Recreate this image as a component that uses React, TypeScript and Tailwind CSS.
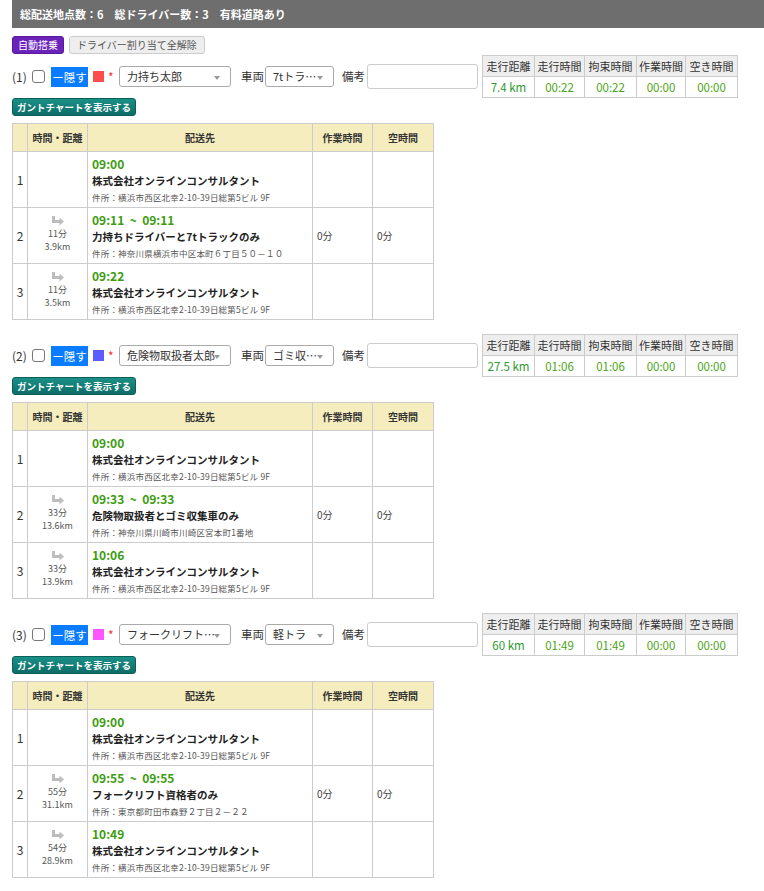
import React from 'react'

type Stop = { time: string; name: string; addr: string; min?: string; km?: string; work?: string; idle?: string }
type Route = {
  no: number
  color: string
  driver: string
  vehicle: string
  summary: string[]
  stops: Stop[]
}

const HQ = '株式会社オンラインコンサルタント'
const HQ_ADDR = '件所：横浜市西区北幸2-10-39日総第5ビル 9F'

const ROUTES: Route[] = [
  {
    no: 1, color: 'bg-[#ff4d4d]', driver: '力持ち太郎', vehicle: '7tトラ…',
    summary: ['7.4 km', '00:22', '00:22', '00:00', '00:00'],
    stops: [
      { time: '09:00', name: HQ, addr: HQ_ADDR },
      { time: '09:11 ~ 09:11', name: '力持ちドライバーと7tトラックのみ', addr: '件所：神奈川県横浜市中区本町６丁目５０－１０', min: '11分', km: '3.9km', work: '0分', idle: '0分' },
      { time: '09:22', name: HQ, addr: HQ_ADDR, min: '11分', km: '3.5km' },
    ],
  },
  {
    no: 2, color: 'bg-[#5b5bff]', driver: '危険物取扱者太郎', vehicle: 'ゴミ収…',
    summary: ['27.5 km', '01:06', '01:06', '00:00', '00:00'],
    stops: [
      { time: '09:00', name: HQ, addr: HQ_ADDR },
      { time: '09:33 ~ 09:33', name: '危険物取扱者とゴミ収集車のみ', addr: '件所：神奈川県川崎市川崎区宮本町1番地', min: '33分', km: '13.6km', work: '0分', idle: '0分' },
      { time: '10:06', name: HQ, addr: HQ_ADDR, min: '33分', km: '13.9km' },
    ],
  },
  {
    no: 3, color: 'bg-[#ff55ff]', driver: 'フォークリフト…', vehicle: '軽トラ',
    summary: ['60 km', '01:49', '01:49', '00:00', '00:00'],
    stops: [
      { time: '09:00', name: HQ, addr: HQ_ADDR },
      { time: '09:55 ~ 09:55', name: 'フォークリフト資格者のみ', addr: '件所：東京都町田市森野２丁目２－２２', min: '55分', km: '31.1km', work: '0分', idle: '0分' },
      { time: '10:49', name: HQ, addr: HQ_ADDR, min: '54分', km: '28.9km' },
    ],
  },
]

const SUMMARY_HEAD = ['走行距離', '走行時間', '拘束時間', '作業時間', '空き時間']
const SUMMARY_W = ['w-[52px]', 'w-[50px]', 'w-[52px]', 'w-[49px]', 'w-[52px]']

function TurnIcon() {
  return (
    <svg width="14" height="10" viewBox="0 0 14 10" className="mx-auto">
      <path d="M2.5 0 V5.5 H9" fill="none" stroke="#bdbdbd" strokeWidth="3" />
      <path d="M8.5 1.5 L13 5.5 L8.5 9.5 Z" fill="#bdbdbd" />
    </svg>
  )
}

function Caret() {
  return <span className="absolute right-[10px] top-[9px] w-0 h-0 border-l-[3.5px] border-r-[3.5px] border-t-[4px] border-l-transparent border-r-transparent border-t-[#999]" />
}

function RouteBlock({ r }: { r: Route }) {
  return (
    <div className="mb-[14px]">
      {/* controls + summary */}
      <div className="flex items-center h-[43px]">
        <div className="flex items-center w-[465px] shrink-0 whitespace-nowrap">
          <span className="text-[12px] text-[#333] w-[20px] shrink-0">({r.no})</span>
          <span className="w-[13px] h-[13px] border border-[#777] rounded-[3px] bg-white shrink-0" />
          <span className="ml-[6px] bg-[#0a7cff] text-white text-[11.5px] leading-[20px] h-[20px] w-[37px] text-center shrink-0">ー隠す</span>
          <span className={`ml-[5px] w-[11px] h-[11px] shrink-0 ${r.color}`} />
          <span className="ml-[4px] text-[#e33] text-[12px] w-[11px] shrink-0">*</span>
          <div className="relative w-[112px] h-[21px] shrink-0 overflow-hidden border border-[#aaa] rounded-[3px] bg-white text-[11px] leading-[19px] pl-[7px] text-[#333]">
            {r.driver}
            <Caret />
          </div>
          <span className="ml-[10px] text-[11.5px] text-[#333] w-[24px] shrink-0">車両</span>
          <div className="relative w-[69px] h-[21px] shrink-0 overflow-hidden border border-[#aaa] rounded-[3px] bg-white text-[11px] leading-[19px] pl-[7px] text-[#333]">
            {r.vehicle}
            <Caret />
          </div>
          <span className="ml-[8px] text-[11.5px] text-[#333] w-[25px] shrink-0">備考</span>
          <div className="w-[111px] h-[25px] shrink-0 border border-[#ccc] rounded-[3px] bg-white" />
        </div>
        <table className="ml-[5px] border-collapse table-fixed whitespace-nowrap">
          <thead>
            <tr>
              {SUMMARY_HEAD.map((h, i) => (
                <th key={h} className={`${SUMMARY_W[i]} border border-[#ccc] bg-[#eee] font-normal text-[#333] text-[11px] h-[21px] p-0 leading-[19px]`}>{h}</th>
              ))}
            </tr>
          </thead>
          <tbody>
            <tr>
              {r.summary.map((v, i) => (
                <td key={i} className={`border border-[#ccc] text-center text-[11.5px] h-[21px] p-0 leading-[19px] ${i === 0 ? 'text-[#2e9a2e]' : 'text-[#4aa514]'}`}>{v}</td>
              ))}
            </tr>
          </tbody>
        </table>
      </div>

      <button className="block w-[124px] h-[18px] rounded-[3px] bg-gradient-to-b from-[#1a9087] to-[#0d6d68] border border-[#0b5f5a] text-white text-[9.5px] font-bold leading-[16px] whitespace-nowrap">
        ガントチャートを表示する
      </button>

      {/* stops */}
      <table className="mt-[7px] w-[421px] border-collapse table-fixed">
        <colgroup>
          <col className="w-[15px]" />
          <col className="w-[60px]" />
          <col className="w-[225px]" />
          <col className="w-[60px]" />
          <col className="w-[61px]" />
        </colgroup>
        <thead>
          <tr className="bg-[#f5edbd] h-[28px] text-[10px] font-bold text-[#333]">
            <th className="border border-[#ccc]" />
            <th className="border border-[#ccc]">時間・距離</th>
            <th className="border border-[#ccc]">配送先</th>
            <th className="border border-[#ccc]">作業時間</th>
            <th className="border border-[#ccc]">空時間</th>
          </tr>
        </thead>
        <tbody>
          {r.stops.map((s, i) => (
            <tr key={i} className="h-[56px]">
              <td className="border border-[#ccc] text-center text-[12px] text-[#333]">{i + 1}</td>
              <td className="border border-[#ccc] text-center text-[9px] text-[#555] leading-[13px]">
                {s.min && (
                  <div className="flex flex-col items-center pb-[3px]">
                    <TurnIcon />
                    <span className="mt-[1px]">{s.min}</span>
                    <span>{s.km}</span>
                  </div>
                )}
              </td>
              <td className="border border-[#ccc] px-[4px] align-middle whitespace-nowrap">
                <div className="text-[12px] font-bold text-[#3c9c10] leading-[16px] whitespace-pre">{s.time.replace(' ~ ', '  ~  ')}</div>
                <div className="text-[10.5px] font-bold text-[#222] leading-[18px]">{s.name}</div>
                <div className="text-[8.5px] text-[#555] leading-[14px] tracking-[0.2px]">{s.addr}</div>
              </td>
              <td className="border border-[#ccc] text-[10px] text-[#444] px-[4px]">{s.work}</td>
              <td className="border border-[#ccc] text-[10px] text-[#444] px-[4px]">{s.idle}</td>
            </tr>
          ))}
        </tbody>
      </table>
    </div>
  )
}

export default function App() {
  return (
    <div className="min-h-screen bg-white pl-[12px] pt-0 font-['Noto_Sans_CJK_JP',sans-serif]">
      <div className="h-[28px] bg-[#6e6e6e] text-white text-[11px] font-bold leading-[28px] pl-[8px] whitespace-nowrap">
        総配送地点数：6　総ドライバー数：3　有料道路あり
      </div>
      <div className="flex items-center gap-[5px] mt-[8px] h-[18px]">
        <button className="h-[18px] px-[5px] rounded-[3px] bg-[#6a22b8] border border-[#5a189e] text-white text-[10px] leading-[16px] whitespace-nowrap">自動搭乗</button>
        <button className="h-[18px] px-[7px] rounded-[3px] bg-[#eee] border border-[#ccc] text-[#555] text-[10px] leading-[16px] whitespace-nowrap">ドライバー割り当て全解除</button>
      </div>
      <div className="mt-[1px]">
        {ROUTES.map(r => <RouteBlock key={r.no} r={r} />)}
      </div>
    </div>
  )
}
